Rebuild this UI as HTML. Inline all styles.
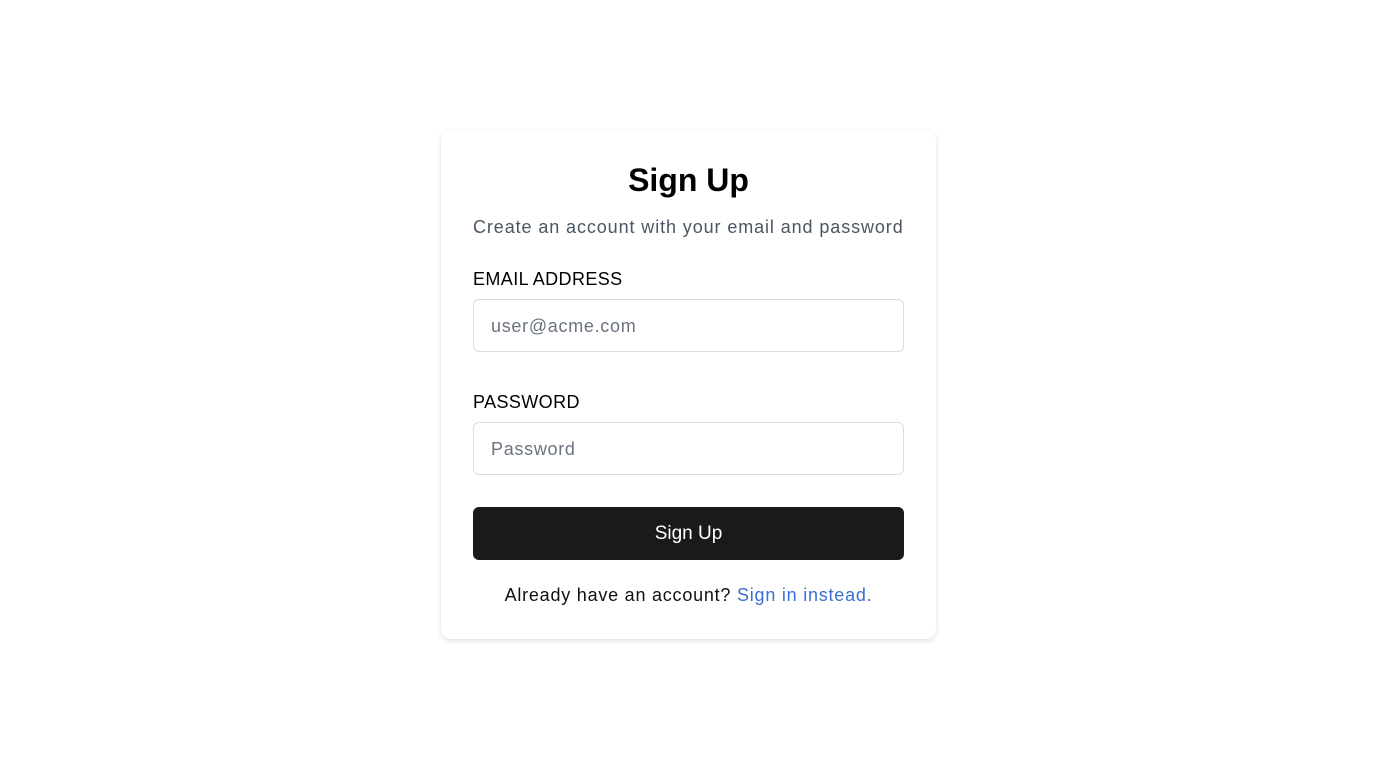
<!DOCTYPE html>
<html><head><style>
html,body{margin:0;background:#fff;width:1376px;height:768px;overflow:hidden;font-family:"Liberation Sans",sans-serif}
.card{position:absolute;left:441px;top:130px;width:495px;height:509px;background:#fff;border-radius:10px;box-shadow:0 2px 6px rgba(0,0,0,0.12),0 0 1px rgba(0,0,0,0.06)}
.a{position:absolute;white-space:nowrap}
.t{width:495px;text-align:center;top:160px;font-size:32px;font-weight:bold;color:#000;line-height:40px}
.s{left:473px;top:215px;font-size:18px;color:#4b5563;line-height:24px;letter-spacing:0.9px}
.l{left:473px;font-size:18px;color:#000;line-height:24px;letter-spacing:0.4px}
.in{position:absolute;left:473px;width:429px;height:51px;border:1px solid #dcdcdf;border-radius:6px;box-sizing:content-box}
.in span{position:absolute;left:17px;top:14px;font-size:18px;color:#6b7280;line-height:24px;letter-spacing:0.7px}
.btn{position:absolute;left:473px;top:507px;width:431px;height:53px;background:#1a1a1b;border-radius:6px;color:#fff;font-size:19px;text-align:center;line-height:53px}
.f{left:441px;width:495px;text-align:center;top:583px;font-size:18px;color:#111;line-height:24px;letter-spacing:0.77px}
.f b{font-weight:normal;color:#3a6fd1}
</style></head><body>
<div class="card"></div>
<div class="a t" style="left:441px">Sign Up</div>
<div class="a s">Create an account with your email and password</div>
<div class="a l" style="top:267px">EMAIL ADDRESS</div>
<div class="in" style="top:299px"><span>user@acme.com</span></div>
<div class="a l" style="top:390px">PASSWORD</div>
<div class="in" style="top:422px"><span>Password</span></div>
<div class="btn">Sign Up</div>
<div class="a f">Already have an account? <b>Sign in instead.</b></div>
</body></html>
